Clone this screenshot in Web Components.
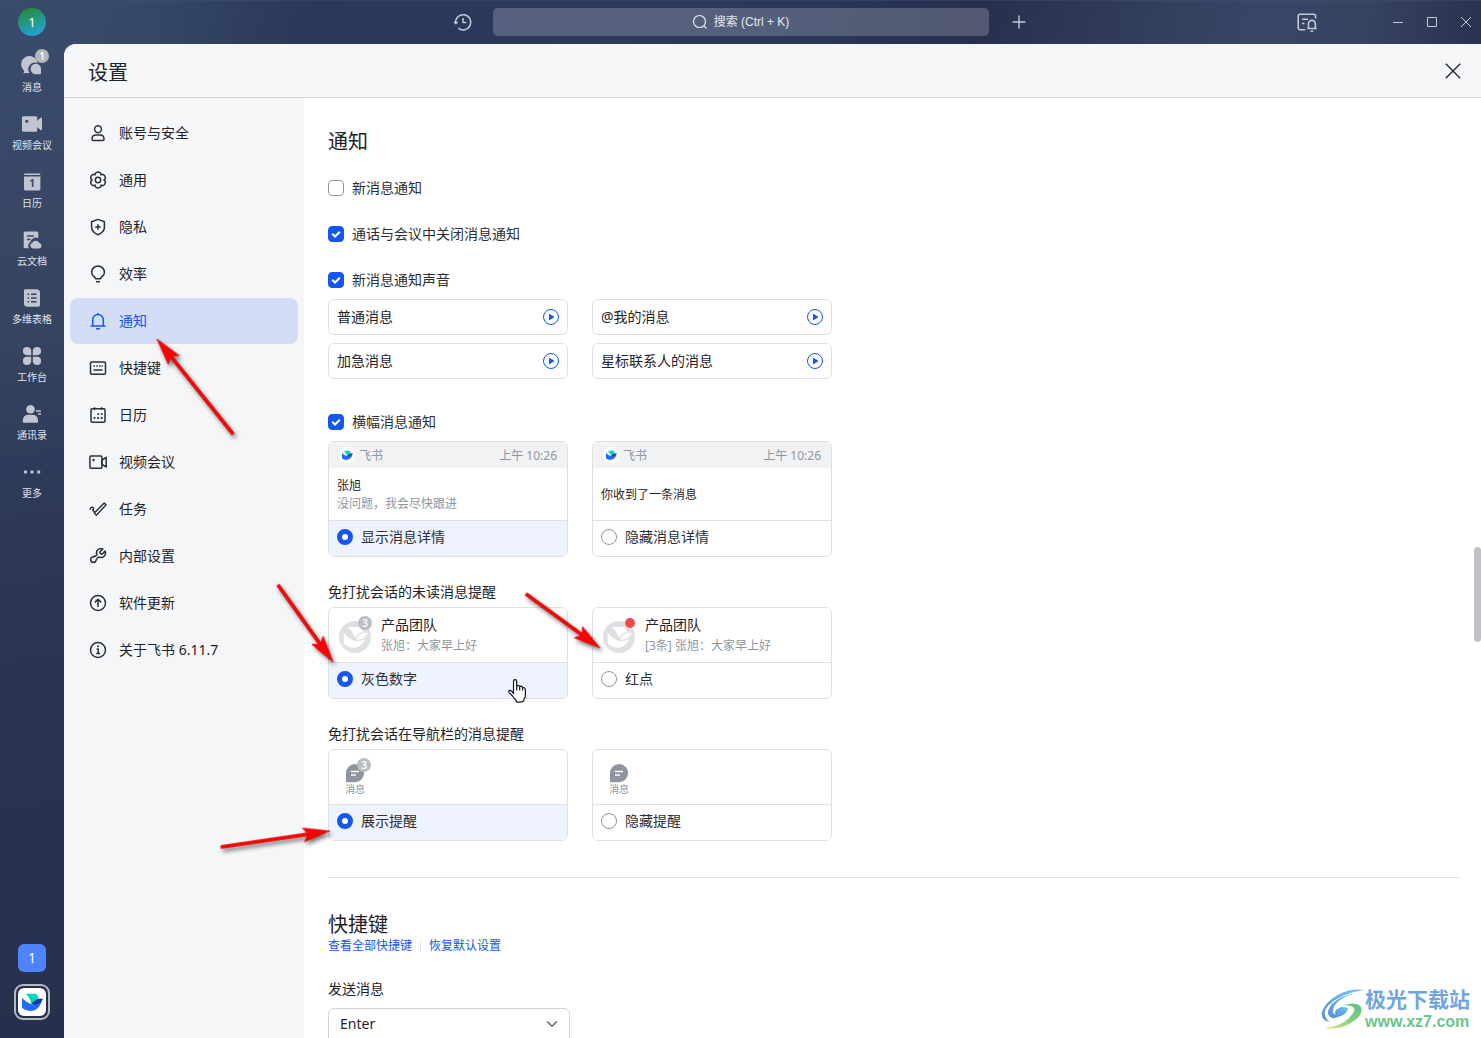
<!DOCTYPE html>
<html lang="zh-CN">
<head>
<meta charset="utf-8">
<title>设置</title>
<style>
html, body { margin: 0; height: 100%; }
body {
  font-family: "Noto Sans", "Noto Sans CJK SC", sans-serif;
  font-size: 14px; line-height: 22px; color: #1f2329;
  --blue: #1456f0; --line: #dee0e3; --muted: #8f959e; --panel: #f5f6f8;
  background: #394a6b; overflow: hidden;
}
</style>
</head>
<body>
<app-shell>
  <top-bar slot="top"></top-bar>
  <nav-rail slot="rail">
    <rail-item icon="chat" label="消息" badge="1"></rail-item>
    <rail-item icon="camera" label="视频会议"></rail-item>
    <rail-item icon="date" label="日历"></rail-item>
    <rail-item icon="cloudDoc" label="云文档"></rail-item>
    <rail-item icon="base" label="多维表格"></rail-item>
    <rail-item icon="petals" label="工作台"></rail-item>
    <rail-item icon="contacts" label="通讯录"></rail-item>
    <rail-item icon="more" label="更多"></rail-item>
  </nav-rail>
  <settings-panel heading="设置">
    <settings-nav slot="nav">
      <nav-link icon="user">账号与安全</nav-link>
      <nav-link icon="gear">通用</nav-link>
      <nav-link icon="shield">隐私</nav-link>
      <nav-link icon="bulb">效率</nav-link>
      <nav-link icon="bell" active>通知</nav-link>
      <nav-link icon="keyboard">快捷键</nav-link>
      <nav-link icon="calendar">日历</nav-link>
      <nav-link icon="video">视频会议</nav-link>
      <nav-link icon="task">任务</nav-link>
      <nav-link icon="wrench">内部设置</nav-link>
      <nav-link icon="update">软件更新</nav-link>
      <nav-link icon="info">关于飞书 6.11.7</nav-link>
    </settings-nav>

    <settings-section heading="通知">
      <check-row>新消息通知</check-row>
      <check-row checked>通话与会议中关闭消息通知</check-row>
      <field-group>
        <check-row slot="label" checked>新消息通知声音</check-row>
        <sound-box>普通消息</sound-box>
        <sound-box>@我的消息</sound-box>
        <sound-box>加急消息</sound-box>
        <sound-box>星标联系人的消息</sound-box>
      </field-group>
      <field-group class="spaced">
        <check-row slot="label" checked>横幅消息通知</check-row>
        <choice-card label="显示消息详情" checked><banner-preview name="张旭">没问题，我会尽快跟进</banner-preview></choice-card>
        <choice-card label="隐藏消息详情"><banner-preview name="你收到了一条消息"></banner-preview></choice-card>
      </field-group>
      <field-group class="tight">
        <span slot="label">免打扰会话的未读消息提醒</span>
        <choice-card label="灰色数字" checked><chat-preview name="产品团队" count="3">张旭：大家早上好</chat-preview></choice-card>
        <choice-card label="红点"><chat-preview name="产品团队" dot>[3条] 张旭：大家早上好</chat-preview></choice-card>
      </field-group>
      <field-group class="tight">
        <span slot="label">免打扰会话在导航栏的消息提醒</span>
        <choice-card label="展示提醒" checked><tab-preview count="3">消息</tab-preview></choice-card>
        <choice-card label="隐藏提醒"><tab-preview>消息</tab-preview></choice-card>
      </field-group>
    </settings-section>
    <shortcut-section></shortcut-section>
  </settings-panel>
</app-shell>
<arrow-layer></arrow-layer>
<site-mark></site-mark>

<script>
const petal = (() => {
  let d = '';
  for (let i = 0; i < 96; i++) {
    const a = i / 96 * Math.PI * 2, r = 5.900 + 2 * Math.pow(Math.abs(Math.cos(3 * a)), 0.6);
    d += (i ? 'L' : 'M') + (9 + r * Math.cos(a + Math.PI / 6)).toFixed(2) + ' ' + (9 + r * Math.sin(a + Math.PI / 6)).toFixed(2);
  }
  return d + 'Z';
})();

const BIRD = (teal, blue, navy, gap) => `
  <path fill="${blue}" d="M0 13Q13 27 30 32Q46 35 57 25L64 15Q59 28 54 37Q44 53 24 53Q9 52 0 43Z"/>
  <path fill="${teal}" ${gap} d="M11 0H43Q50 7 51 15Q39 17 29 31Q24 12 11 0Z"/>
  <path fill="${navy}" ${gap} d="M64 16Q47 12 36 23L28 31Q45 39 56 27Z"/>`;

const GREY_BIRD = `<g fill="#fff">
  <path d="M2 14Q14 30 31 36Q45 39 57 30Q48 53 25 53Q11 52 2 43Z"/>
  <path d="M13 0H43Q50 7 51 12Q40 15 30 26Q25 12 13 0Z"/>
  <path d="M64 15Q49 13 38 23L32 30Q46 36 55 26Z"/></g>`;

const ICONS = {
  user: [18, `<circle cx="9" cy="5.2" r="3.4"/><path d="M3 15.2C3 12.400 5 11 7 11h4c2 0 4 1.400 4 4.200 0 .8-.4 1.200-1.200 1.200H4.200C3.400 16.400 3 16 3 15.200Z"/>`],
  gear: [18, `<path d="${petal}"/><circle cx="9" cy="9" r="2.7"/>`],
  shield: [18, `<path d="M9 1.400 15.400 3.700V9.200C15.400 13 12.600 15.200 9 16.700 5.400 15.200 2.600 13 2.600 9.200V3.700Z"/><path d="M9 6.200v5.600M6.200 9h5.600"/>`],
  bulb: [18, `<path d="M6.600 13.800C6.500 12 2.600 11.300 2.600 7.400a6.400 6.400 0 0 1 12.800 0C15.400 11.300 11.500 12 11.400 13.800Z"/><path d="M7 16.700h4"/>`],
  bell: [18, `<path d="M3.700 14V7.700a5.300 5.300 0 0 1 10.600 0V14M1.500 14.100h15M9 1v1.300M7 16.800h4"/>`],
  keyboard: [18, `<rect x="1.500" y="3" width="15" height="12.300" rx="1.200"/><path d="M4.500 7h1.500M7.300 7h1.500M10 7h1.500M12.600 7h1.200M4.500 11h9"/>`],
  calendar: [18, `<rect x="2" y="2.800" width="14" height="13.500" rx="1.200"/><path d="M5.500 1.300v2.800M12.500 1.300v2.800"/><path stroke-width="1.800" d="M8.400 8.200H10.100M11.800 8.200h1.700M4.700 12h1.700M8.200 12h1.700M11.800 12h1.700"/>`],
  video: [18, `<rect x=".9" y="3" width="12" height="12.300" rx="1"/><path d="M13 7 17.200 4.500V14L13 11.300Z"/><circle cx="4.500" cy="7" r="1.200" fill="currentColor" stroke="none"/>`],
  task: [18, `<path stroke-width="1.400" d="M15.200 2.900 17.100 4.800 7.400 15.200 5.300 13.100ZM1.400 9.800C.9 8.200 2.300 6.900 3.700 7.400 4.900 8 4.700 9.200 3.600 10L5.600 12.300"/>`],
  wrench: [24, `<path stroke-width="2" d="M14.7 6.3a1 1 0 0 0 0 1.4l1.6 1.6a1 1 0 0 0 1.4 0l3.77-3.77a6 6 0 0 1-7.94 7.94C11 13.500 10.500 15.500 9.500 17.500A3.700 3.700 0 1 1 5 13.200C8 12.500 10 11.500 10.530 10.470a6 6 0 0 1 7.94-7.94l-3.76 3.76z"/>`],
  update: [18, `<circle cx="9" cy="9" r="7.500"/><path d="M9 13V5.400M5.800 8.400 9 5.200 12.200 8.400"/>`],
  info: [18, `<circle cx="9" cy="9" r="7.500"/><path d="M7.600 8H9.200V12.500M7.200 12.600h4"/><circle cx="9" cy="5.300" r="1" fill="currentColor" stroke="none"/>`],
  history: [18, `<path stroke-width="1.500" d="M1.600 10A7.600 7.600 0 1 1 4.400 15.200M.2 8.800 1.700 10.600 3.600 9M9 5v4.500h3.300"/>`],
  search: [16, `<circle cx="7.500" cy="7.500" r="6" stroke-width="1.200"/><path stroke-width="1.200" d="M11.900 11.900 14.500 14.500"/>`],
  plus: [18, `<path stroke-width="1.400" d="M9 2.500v13M2.500 9h13"/>`],
  feed: [20, `<path stroke-width="1.600" d="M18.600 6.500V4.300A2 2 0 0 0 16.600 2.300H3.200A2 2 0 0 0 1.200 4.300V15.700A2 2 0 0 0 3.200 17.700H8.200M5 7.200h6M5 11.500h2.500M10.200 16.500h9.600M11.500 16.300V11.800a3.400 3.400 0 0 1 6.800 0V16.300M13.600 19.200h2.600"/>`],
  min: [16, `<path stroke-width="1" d="M3 8.500h10"/>`],
  max: [16, `<rect stroke-width="1" x="3.500" y="3.500" width="9" height="9"/>`],
  close: [16, `<path stroke-width="1" d="M3 3 13 13M13 3 3 13"/>`],
  closeLarge: [16, `<path stroke-width="1.500" d="M.8.800 15.200 15.200M15.200.8.800 15.200"/>`],
  down: [12, `<path stroke-width="1.500" d="M1.200 3.500 6 8.200 10.800 3.500"/>`],
  play: [16, `<circle cx="8" cy="8" r="7.500" stroke-width="1"/><path stroke="none" fill="currentColor" d="M6 5.200Q6 4.500 6.700 4.900L10.900 7.500Q11.500 8 10.900 8.500L6.700 11.100Q6 11.500 6 10.800Z"/>`],
  chat: [20, `<g fill="currentColor" stroke="none"><path d="M1 17.200Q2.600 16.600 2 14.400A8.200 8.200 0 1 1 15.500 7.200A6.600 6.600 0 0 0 7.400 16.900Z"/><path d="M19 12.800V17.400Q19 18.200 18.200 18.200H13.700A5.200 5.200 0 1 1 19 12.800Z"/></g>`],
  camera: [20, `<path fill="currentColor" stroke="none" fill-rule="evenodd" d="M1.500 2.300H13.700Q15.200 2.300 15.200 3.800V6.800L18.400 3.900Q20 2.800 20 4.800V15Q20 17 18.400 15.900L15.200 13V16.200Q15.200 17.700 13.700 17.700H1.500Q0 17.700 0 16.200V3.800Q0 2.300 1.500 2.300ZM4.800 5.700a1.600 1.600 0 1 0 .01 0Z"/>`],
  date: [20, `<g fill="currentColor" stroke="none"><path d="M2.800 1.500H17.600Q18.400 1.500 18.400 3H2Q2 1.500 2.800 1.500Z"/><path d="M2 4.500H18.400V17Q18.400 18.600 16.800 18.600H3.600Q2 18.600 2 17Z"/></g><text x="10.200" y="15" text-anchor="middle" font-size="10" font-weight="700" fill="#36466a" stroke="none">1</text>`],
  cloudDoc: [20, `<path fill="currentColor" stroke="none" d="M3 1.500H15Q16.300 1.500 16.300 3V8.200A5.600 5.600 0 0 0 8.300 12.300 4 4 0 0 0 7 18.300H3Q1.700 18.300 1.700 17V3Q1.700 1.500 3 1.500Z"/><path d="M5 6h7M5 9.500h3.500" stroke="#36466a" stroke-width="1.500"/><path fill="currentColor" stroke="none" d="M10.800 18.500A3 3 0 0 1 10.300 12.700 4 4 0 0 1 17.400 13 2.800 2.800 0 0 1 17 18.500Z"/>`],
  base: [20, `<path fill="currentColor" stroke="none" d="M3 1.200H14.500Q18 1.200 18 4.700V17Q18 18.800 16.500 18.800H5.500Q2 18.800 2 15.500V2.400Q2 1.200 3 1.200Z"/><path stroke="#34435f" stroke-width="1.500" d="M5.500 6.200h1.600M9 6.200h5.500M5.500 10h1.600M9 10h5.500M5.500 13.800h1.600M9 13.800h5.500"/>`],
  petals: [20, `<g fill="currentColor" stroke="none"><path d="M5 1A4 4 0 0 1 9.200 5V9.200H5A4.100 4.100 0 0 1 5 1Z"/><path d="M15 1A4 4 0 0 0 10.800 5V9.200H15A4.100 4.100 0 0 0 15 1Z"/><path d="M5 19A4 4 0 0 0 9.200 15V10.800H5A4.100 4.100 0 0 0 5 19Z"/><path d="M15 19A4 4 0 0 1 10.800 15V10.800H15A4.100 4.100 0 0 1 15 19Z"/></g>`],
  contacts: [20, `<g fill="currentColor" stroke="none"><circle cx="8.500" cy="5.200" r="4.300"/><path d="M.8 17.500Q.8 10.800 6 10.800H11Q16 10.800 16 17.500 16 18.800 14.700 18.800H2.100Q.8 18.800.8 17.500Z"/></g><path stroke-width="1.400" d="M14 7h5M16 10h3"/>`],
  more: [20, `<g fill="currentColor" stroke="none"><circle cx="3.500" cy="10" r="1.700"/><circle cx="10" cy="10" r="1.700"/><circle cx="16.700" cy="10" r="1.700"/></g>`],
  bubble: [20, `<path fill="currentColor" stroke="none" d="M10 1A9 9 0 0 1 10 19.200H2Q1 19.200 1 18.200V10A9 9 0 0 1 10 1Z"/><path stroke="#fff" stroke-width="1.500" d="M6 8.500h8M6 12h5"/>`]
};

class Base extends HTMLElement {
  connectedCallback() {
    if (this.shadowRoot) return;
    this.attachShadow({ mode: 'open' }).innerHTML = this.view();
    this.ready();
  }
  attr(n) { return this.getAttribute(n) || ''; }
  ready() {}
}
const RESET = `button{font:inherit;color:inherit;background:none;border:0;padding:0;margin:0;display:flex;align-items:center}a{text-decoration:none;color:inherit}`;

customElements.define('ui-icon', class extends Base {
  view() {
    const [box, body] = ICONS[this.attr('name')], size = this.attr('size') || 18;
    return `<style>:host{display:block;flex:none}svg{display:block;overflow:visible}</style>
    <svg width="${size}" height="${size}" viewBox="0 0 ${box} ${box}" fill="none" stroke="currentColor" stroke-width="1.500" stroke-linejoin="round" aria-hidden="true">${body}</svg>`;
  }
});

customElements.define('bird-logo', class extends Base {
  view() {
    const size = this.attr('size');
    const art = this.hasAttribute('grey') ? GREY_BIRD : BIRD('#00d6b9', '#1f6bff', '#133c9a', '');
    return `<style>:host{display:block;flex:none}svg{display:block}</style><svg width="${size}" height="${size}" viewBox="0 -5 64 64" aria-hidden="true">${art}</svg>`;
  }
});

customElements.define('app-shell', class extends Base {
  view() {
    return `<style>:host{display:grid;grid-template:44px minmax(0,1fr) / 64px minmax(0,1fr);height:100vh}
    slot[name=top]::slotted(*){grid-column:1/-1}</style>
    <slot name="top"></slot><slot name="rail"></slot><slot></slot>`;
  }
});

customElements.define('top-bar', class extends Base {
  view() {
    return `<style>${RESET}
    :host{display:grid;grid-template-columns:1fr auto 1fr;align-items:center;color:#c3c9d5;
      background:linear-gradient(100deg,#3a4a6b 0%,#36476a 10%,#2a3859 21%,#2b3a5d 42%,#29375a 55%,#272f4d 66%,#2b3553 70%,#384766 85%,#364361 92%,#29324f 100%);box-shadow:inset 0 1px #46567655}
    .me{width:28px;height:28px;border-radius:50%;margin-left:18px;justify-content:center;color:#fff;font-size:13px;background:linear-gradient(160deg,#2a8a3c 10%,#229a8c 50%,#22a4e0 95%)}
    .mid{display:flex;align-items:center;gap:21px}
    .search{width:min(496px,40vw);height:28px;border-radius:5px;background:#ffffff33;justify-content:center;gap:6px;color:#e6e9ef;font:12px/18px "Liberation Sans","Noto Sans CJK SC",sans-serif}
    .win{display:flex;justify-content:flex-end;align-items:center;gap:18px;padding-right:7px}
    .feed{margin-right:55px}</style>
    <button class="me">1</button>
    <div class="mid"><button aria-label="历史"><ui-icon name="history"></ui-icon></button>
      <button class="search"><ui-icon name="search" size="16"></ui-icon><span>搜索 (Ctrl + K)</span></button>
      <button aria-label="新建"><ui-icon name="plus"></ui-icon></button></div>
    <div class="win"><button class="feed" aria-label="通知"><ui-icon name="feed" size="20"></ui-icon></button>
      <button aria-label="最小化"><ui-icon name="min" size="16"></ui-icon></button>
      <button aria-label="最大化"><ui-icon name="max" size="16"></ui-icon></button>
      <button aria-label="关闭"><ui-icon name="close" size="16"></ui-icon></button></div>`;
  }
});

customElements.define('nav-rail', class extends Base {
  view() {
    return `<style>${RESET}
    :host{display:flex;flex-direction:column;justify-content:space-between;align-items:center;padding:12px 0 18px;
      background:linear-gradient(172deg,#3a4a6b 0%,#35445f 30%,#2f3b5a 42%,#2a3552 60%,#262f4b 100%)}
    nav{display:flex;flex-direction:column;gap:20px;align-items:center}
    .low{display:flex;flex-direction:column;gap:12px;align-items:center}
    .one{width:28px;height:28px;border-radius:6px;background:#4d83fb;color:#fff;justify-content:center}
    .app{width:36px;height:36px;box-sizing:border-box;border:2px solid #b4b9c5;border-radius:9px;justify-content:center}
    .app span{width:28px;height:28px;border-radius:6px;background:#fff;display:grid;place-items:center}</style>
    <nav><slot></slot></nav>
    <div class="low"><button class="one">1</button><button class="app" aria-label="飞书"><span><bird-logo size="21"></bird-logo></span></button></div>`;
  }
});

customElements.define('count-badge', class extends Base {
  view() {
    return `<style>:host{display:grid;place-items:center;box-sizing:border-box;width:14px;height:14px;border-radius:50%;background:#bbbfc4;color:#fff;font-weight:600;font-size:10px;line-height:14px}</style><slot></slot>`;
  }
});

customElements.define('rail-item', class extends Base {
  view() {
    const b = this.attr('badge');
    return `<style>${RESET}:host{display:block}
    a{display:flex;flex-direction:column;align-items:center;gap:4px;color:#e0e4ec;font-size:10px;line-height:14px;white-space:nowrap}
    .pic{position:relative;color:#c0c5d0}
    count-badge{position:absolute;left:13px;top:-7px;background:#b4b8be}</style>
    <a href="#"><span class="pic"><ui-icon name="${this.attr('icon')}" size="20"></ui-icon>${b ? `<count-badge>${b}</count-badge>` : ''}</span><span>${this.attr('label')}</span></a>`;
  }
});

customElements.define('settings-panel', class extends Base {
  view() {
    return `<style>${RESET}
    :host{display:grid;grid-template:auto minmax(0,1fr) / 240px minmax(0,1fr);background:#fff;border-top-left-radius:12px;overflow:hidden}
    header{grid-column:1/-1;display:flex;justify-content:space-between;align-items:center;height:53px;padding:0 20px 0 24px;background:var(--panel);border-bottom:1px solid #d5d7da}
    h1{margin:0;padding-top:4px;font-size:20px;line-height:28px;font-weight:400}
    header button{color:#2b2f36}
    main{position:relative;overflow:hidden;padding:32px 22px 0 24px}
    .thumb{position:absolute;right:0;top:449px;width:7px;height:95px;border-radius:4px;background:#bfc1c5}</style>
    <header><h1>${this.attr('heading')}</h1><button aria-label="关闭设置"><ui-icon name="closeLarge" size="16"></ui-icon></button></header>
    <slot name="nav"></slot><main><slot></slot><div class="thumb"></div></main>`;
  }
});

customElements.define('settings-nav', class extends Base {
  view() {
    return `<style>:host{display:block;background:var(--panel)}nav{display:flex;flex-direction:column;gap:1px;padding:12px 6px}</style><nav><slot></slot></nav>`;
  }
});

customElements.define('nav-link', class extends Base {
  view() {
    return `<style>${RESET}:host{display:block}
    a{display:flex;align-items:center;gap:12px;height:46px;padding:0 19px;border-radius:8px}
    ui-icon{color:#2b2f36}
    :host([active]) a{background:#d3ddf6;color:var(--blue)}:host([active]) ui-icon{color:var(--blue)}</style>
    <a href="#"><ui-icon name="${this.attr('icon')}"></ui-icon><span><slot></slot></span></a>`;
  }
});

customElements.define('settings-section', class extends Base {
  view() {
    return `<style>:host{display:block;padding-bottom:36px;border-bottom:1px solid var(--line)}
    h2{margin:0 0 23px;font-size:20px;line-height:24px;font-weight:400}
    .stack{display:flex;flex-direction:column;gap:24px}
    ::slotted(.spaced){margin-top:8px}</style>
    <h2>${this.attr('heading')}</h2><div class="stack"><slot></slot></div>`;
  }
});

customElements.define('field-group', class extends Base {
  view() {
    return `<style>:host{display:flex;flex-direction:column;gap:8px}
    :host(.tight){gap:4px}
    .cells{display:grid;grid-template-columns:repeat(2,minmax(0,240px));gap:8px 24px}</style>
    <slot name="label"></slot><div class="cells"><slot></slot></div>`;
  }
  ready() {
    this.addEventListener('choose', e => this.querySelectorAll('choice-card').forEach(c => c.select(c === e.target)));
  }
});

customElements.define('check-row', class extends Base {
  view() {
    return `<style>:host{display:flex}
    label{display:flex;align-items:center;gap:8px;color:#2b2f36}
    input{appearance:none;margin:0;width:16px;height:16px;box-sizing:border-box;border:1px solid #8f959e;border-radius:4px;background:#fff;grid-area:1/1}
    input:checked{background:var(--blue);border-color:var(--blue)}
    .box{display:grid;place-items:center}
    svg{grid-area:1/1;pointer-events:none;display:none}
    input:checked + svg{display:block}</style>
    <label><span class="box"><input type="checkbox" ${this.hasAttribute('checked') ? 'checked' : ''}><svg width="10" height="10" viewBox="0 0 10 10" fill="none" stroke="#fff" stroke-width="2"><path d="M1.200 4.800 4 7.500 8.800 2.700"/></svg></span><span><slot></slot></span></label>`;
  }
});

customElements.define('sound-box', class extends Base {
  view() {
    return `<style>${RESET}:host{display:flex;align-items:center;justify-content:space-between;box-sizing:border-box;height:36px;padding:0 8px;border:1px solid var(--line);border-radius:6px}
    button{color:var(--blue)}</style><span><slot></slot></span><button aria-label="播放"><ui-icon name="play" size="16"></ui-icon></button>`;
  }
});

customElements.define('choice-card', class extends Base {
  view() {
    return `<style>:host{display:flex;flex-direction:column;border:1px solid var(--line);border-radius:6px;overflow:hidden}
    label{display:flex;align-items:center;gap:8px;border-top:1px solid var(--line);height:32px;padding:0 8px 3px;color:#2b2f36}
    :host([checked]) label{background:#eff3ff}
    input{appearance:none;margin:0;width:16px;height:16px;box-sizing:border-box;border:1px solid #8f959e;border-radius:50%;background:#fff}
    input:checked{border:5px solid var(--blue)}</style>
    <slot></slot><label><input type="radio" ${this.hasAttribute('checked') ? 'checked' : ''}><span>${this.attr('label')}</span></label>`;
  }
  ready() {
    this.shadowRoot.querySelector('input').addEventListener('change', () => this.dispatchEvent(new CustomEvent('choose', { bubbles: true })));
  }
  select(on) { this.toggleAttribute('checked', on); this.shadowRoot.querySelector('input').checked = on; }
});

customElements.define('banner-preview', class extends Base {
  view() {
    return `<style>:host{display:block;font-size:12px;line-height:18px}
    .bar{display:flex;align-items:center;gap:4px;height:26px;padding:0 10px;background:#f1f2f4;color:var(--muted)}
    .bar i{width:16px;height:16px;border-radius:50%;background:#fff;display:grid;place-items:center}
    .bar span,.bar time{padding-top:2px}
    .bar time{margin-left:auto}
    .text{display:flex;flex-direction:column;justify-content:center;box-sizing:border-box;height:52px;padding:2px 8px 0}
    .sub{color:var(--muted)}</style>
    <div class="bar"><i><bird-logo size="11"></bird-logo></i><span>飞书</span><time>上午 10:26</time></div>
    <div class="text"><span>${this.attr('name')}</span>${this.textContent ? '<span class="sub"><slot></slot></span>' : ''}</div>`;
  }
});

customElements.define('chat-preview', class extends Base {
  view() {
    const n = this.attr('count');
    return `<style>:host{display:flex;gap:10px;height:54px;padding:0 10px;box-sizing:border-box}
    .face{position:relative;width:32px;height:32px;margin-top:13px;border-radius:50%;background:#dee0e3;display:grid;place-items:center}
    .dot,count-badge{position:absolute}
    count-badge{right:-1px;top:-5px}
    .dot{right:0;top:-3px;width:10px;height:10px;border-radius:50%;background:#f54a45}
    .text{display:flex;flex-direction:column;gap:1px;padding-top:6px}
    .sub{font-size:12px;line-height:18px;color:var(--muted)}</style>
    <div class="face"><bird-logo grey size="25"></bird-logo>${n ? `<count-badge>${n}</count-badge>` : '<span class="dot"></span>'}</div>
    <div class="text"><span>${this.attr('name')}</span><span class="sub"><slot></slot></span></div>`;
  }
});

customElements.define('tab-preview', class extends Base {
  view() {
    const n = this.attr('count');
    return `<style>:host{display:flex;height:54px;padding:13px 16px 0;box-sizing:border-box}
    .tab{display:flex;flex-direction:column;align-items:center;color:var(--muted);font-size:10px;line-height:12px}
    .pic{position:relative}
    count-badge{position:absolute;left:12px;top:-5px}</style>
    <div class="tab"><span class="pic"><ui-icon name="bubble" size="20"></ui-icon>${n ? `<count-badge>${n}</count-badge>` : ''}</span><span><slot></slot></span></div>`;
  }
});

customElements.define('shortcut-section', class extends Base {
  view() {
    return `<style>:host{display:block;padding-top:35px}
    h2{margin:0;font-size:20px;line-height:24px;font-weight:400}
    .links{display:flex;align-items:center;gap:8px;font-size:12px;line-height:18px;margin-bottom:23px}
    .links a{color:var(--blue);text-decoration:none}
    .links i{width:1px;height:10px;background:var(--line)}
    label{display:block;margin-bottom:8px}
    .pick{display:grid;width:242px;align-items:center}
    select{grid-area:1/1;appearance:none;height:36px;padding:0 11px 4px;border:1px solid #d0d3d6;border-radius:6px;background:#fff;color:inherit;font:inherit}
    .pick ui-icon{grid-area:1/1;justify-self:end;margin-right:12px;margin-bottom:4px;pointer-events:none;color:#646a73}</style>
    <h2>快捷键</h2><div class="links"><a href="#">查看全部快捷键</a><i></i><a href="#">恢复默认设置</a></div>
    <label for="send">发送消息</label>
    <div class="pick"><select id="send"><option>Enter</option></select><ui-icon name="down" size="12"></ui-icon></div>`;
  }
});

customElements.define('arrow-layer', class extends Base {
  view() {
    const arrows = [[157,339,233,434],[333,662,278,585],[600,648,526,594],[330,831,221,847]].map(([x, y, tx, ty]) => {
      const L = Math.hypot(tx - x, ty - y), a = Math.atan2(ty - y, tx - x) * 180 / Math.PI;
      return `<path transform="translate(${x} ${y}) rotate(${a})" d="M0 0 27 -7 23 -1.500H${L}V1.500H23L27 7Z"/>`;
    }).join('');
    return `<style>:host{position:absolute;inset:0;pointer-events:none}svg{display:block;overflow:visible}.a{filter:drop-shadow(2px 3px 2px #0008)}</style>
    <svg width="100%" height="100%" aria-hidden="true"><g class="a" fill="#fe0000" stroke="#d80000" stroke-width=".6">${arrows}</g>
    <path transform="translate(508 679)" fill="#fff" stroke="#10131a" stroke-width="1.200" stroke-linejoin="round" d="M5.500 14.500V2.200a1.600 1.600 0 0 1 3.200 0V7.500Q9 6.200 10.300 6.300 11.600 6.400 11.700 8 12.200 7 13.400 7.200 14.500 7.400 14.600 9 15.200 8.300 16.200 8.700 17.400 9.200 17.400 10.800V16Q17.400 18.500 15.800 20.500V22Q12 24 8.200 22.600V21.200Q6 19.500 4.500 17L1 13.300Q.3 12 1.400 11.500 2.500 11.200 3.600 12.200ZM8.700 7.500v4M11.700 8v3.500M14.600 9v2.500"/></svg>`;
  }
});

customElements.define('site-mark', class extends Base {
  view() {
    return `<style>:host{position:absolute;right:11px;bottom:6px;display:flex;align-items:center;pointer-events:none}
    svg{display:block}
    .words{display:flex;flex-direction:column;font-weight:700}
    .cn{font-size:21px;line-height:26px;color:#6fa6dd}
    .url{font:700 16px/20px "Liberation Sans",sans-serif;color:#6cc58a}</style>
    <svg width="44" height="42" viewBox="0 0 44 42" aria-hidden="true">
      <defs><linearGradient id="b" x1="0" y1="1" x2="1" y2="0"><stop offset="0" stop-color="#5b8fd6"/><stop offset="1" stop-color="#6cc6f5"/></linearGradient>
      <linearGradient id="g" x1="0" y1="1" x2="1" y2="0"><stop offset="0" stop-color="#e6e67a"/><stop offset=".5" stop-color="#86d184"/><stop offset="1" stop-color="#5cc08a"/></linearGradient></defs>
      <path fill="url(#b)" d="M43 2Q30 0 17 7 4 14 1 24-.5 32 8 34-.5 25 8 17 20 5 43 2Z"/>
      <path fill="url(#b)" d="M36 5Q20 7 11 16 3 26 11 30 16 31 21 26 15 28 12 25 11 18 19 12 26 7 36 5Z"/>
      <path fill="url(#g)" d="M22 17Q36 13 40 19 43 28 28 36 17 42 4 40 20 38 28 30 36 22 32 19 28 17 22 17Z"/>
      <path fill="url(#b)" d="M27 20Q18 17 14 24 14 29 20 28 26 26 27 20Q22 20 19 23 17 26 20 25 24 24 27 20Z"/>
    </svg>
    <div class="words"><span class="cn">极光下载站</span><span class="url">www.xz7.com</span></div>`;
  }
});
</script>
</body>
</html>
